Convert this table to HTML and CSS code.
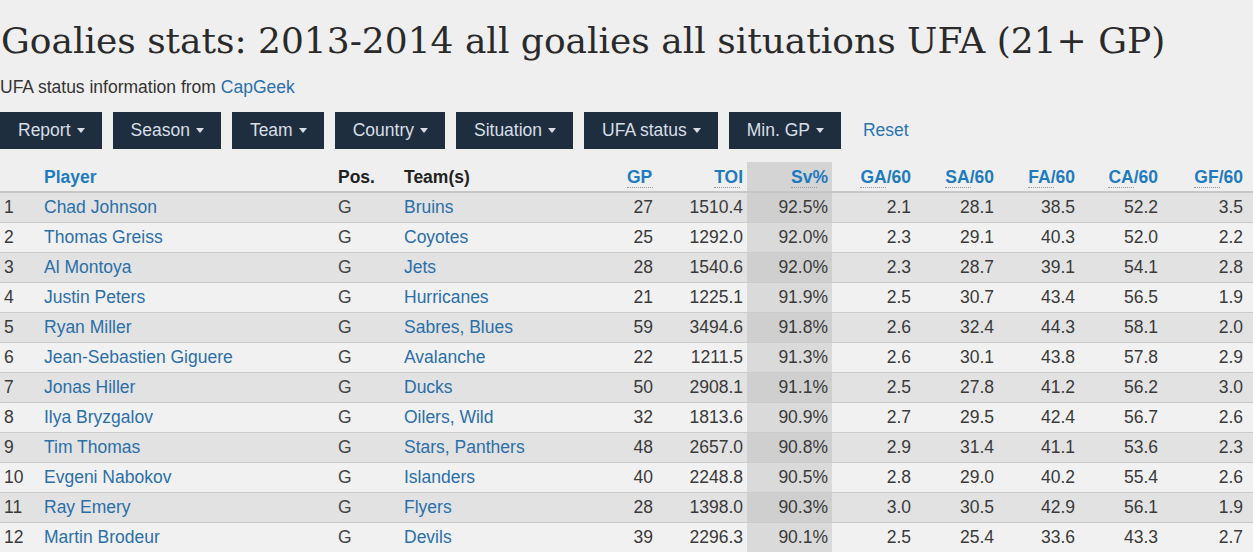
FILE: index.html
```html
<!DOCTYPE html>
<html lang="en">
<head>
<meta charset="utf-8">
<title>Goalies stats</title>
<link rel="stylesheet" href="styles.css">
</head>
<body>
<div class="page">
  <h1 class="title">Goalies stats: 2013-2014 all goalies all situations UFA (21+ GP)</h1>
  <p class="subtitle">UFA status information from <a class="link" href="#">CapGeek</a></p>
  <div class="toolbar">
    <span class="btn">Report<span class="caret"></span></span>
    <span class="btn">Season<span class="caret"></span></span>
    <span class="btn">Team<span class="caret"></span></span>
    <span class="btn">Country<span class="caret"></span></span>
    <span class="btn">Situation<span class="caret"></span></span>
    <span class="btn">UFA status<span class="caret"></span></span>
    <span class="btn">Min. GP<span class="caret"></span></span>
    <a class="reset" href="#">Reset</a>
  </div>
  <table class="stats">
    <colgroup>
      <col class="c-rank"><col class="c-player"><col class="c-pos"><col class="c-team">
      <col class="c-gp"><col class="c-toi"><col class="c-sv"><col class="c-ga">
      <col class="c-sa"><col class="c-fa"><col class="c-ca"><col class="c-gf">
    </colgroup>
    <thead>
      <tr>
        <th class="rank"></th>
        <th class="left sort">Player</th>
        <th class="left">Pos.</th>
        <th class="left">Team(s)</th>
        <th class="num sort"><span class="abbr">GP</span></th>
        <th class="num sort"><span class="abbr">TOI</span></th>
        <th class="num sort sv"><span class="abbr">Sv%</span></th>
        <th class="num sort"><span class="abbr">GA/60</span></th>
        <th class="num sort"><span class="abbr">SA/60</span></th>
        <th class="num sort"><span class="abbr">FA/60</span></th>
        <th class="num sort"><span class="abbr">CA/60</span></th>
        <th class="num sort last"><span class="abbr">GF/60</span></th>
      </tr>
    </thead>
    <tbody>
      <tr><td class="rank">1</td><td class="left"><a class="link" href="#">Chad Johnson</a></td><td class="left pos">G</td><td class="left"><a class="link" href="#">Bruins</a></td><td class="num">27</td><td class="num">1510.4</td><td class="num sv">92.5%</td><td class="num">2.1</td><td class="num">28.1</td><td class="num">38.5</td><td class="num">52.2</td><td class="num last">3.5</td></tr>
      <tr><td class="rank">2</td><td class="left"><a class="link" href="#">Thomas Greiss</a></td><td class="left pos">G</td><td class="left"><a class="link" href="#">Coyotes</a></td><td class="num">25</td><td class="num">1292.0</td><td class="num sv">92.0%</td><td class="num">2.3</td><td class="num">29.1</td><td class="num">40.3</td><td class="num">52.0</td><td class="num last">2.2</td></tr>
      <tr><td class="rank">3</td><td class="left"><a class="link" href="#">Al Montoya</a></td><td class="left pos">G</td><td class="left"><a class="link" href="#">Jets</a></td><td class="num">28</td><td class="num">1540.6</td><td class="num sv">92.0%</td><td class="num">2.3</td><td class="num">28.7</td><td class="num">39.1</td><td class="num">54.1</td><td class="num last">2.8</td></tr>
      <tr><td class="rank">4</td><td class="left"><a class="link" href="#">Justin Peters</a></td><td class="left pos">G</td><td class="left"><a class="link" href="#">Hurricanes</a></td><td class="num">21</td><td class="num">1225.1</td><td class="num sv">91.9%</td><td class="num">2.5</td><td class="num">30.7</td><td class="num">43.4</td><td class="num">56.5</td><td class="num last">1.9</td></tr>
      <tr><td class="rank">5</td><td class="left"><a class="link" href="#">Ryan Miller</a></td><td class="left pos">G</td><td class="left"><a class="link" href="#">Sabres</a><span class="link">, </span><a class="link" href="#">Blues</a></td><td class="num">59</td><td class="num">3494.6</td><td class="num sv">91.8%</td><td class="num">2.6</td><td class="num">32.4</td><td class="num">44.3</td><td class="num">58.1</td><td class="num last">2.0</td></tr>
      <tr><td class="rank">6</td><td class="left"><a class="link" href="#">Jean-Sebastien Giguere</a></td><td class="left pos">G</td><td class="left"><a class="link" href="#">Avalanche</a></td><td class="num">22</td><td class="num">1211.5</td><td class="num sv">91.3%</td><td class="num">2.6</td><td class="num">30.1</td><td class="num">43.8</td><td class="num">57.8</td><td class="num last">2.9</td></tr>
      <tr><td class="rank">7</td><td class="left"><a class="link" href="#">Jonas Hiller</a></td><td class="left pos">G</td><td class="left"><a class="link" href="#">Ducks</a></td><td class="num">50</td><td class="num">2908.1</td><td class="num sv">91.1%</td><td class="num">2.5</td><td class="num">27.8</td><td class="num">41.2</td><td class="num">56.2</td><td class="num last">3.0</td></tr>
      <tr><td class="rank">8</td><td class="left"><a class="link" href="#">Ilya Bryzgalov</a></td><td class="left pos">G</td><td class="left"><a class="link" href="#">Oilers</a><span class="link">, </span><a class="link" href="#">Wild</a></td><td class="num">32</td><td class="num">1813.6</td><td class="num sv">90.9%</td><td class="num">2.7</td><td class="num">29.5</td><td class="num">42.4</td><td class="num">56.7</td><td class="num last">2.6</td></tr>
      <tr><td class="rank">9</td><td class="left"><a class="link" href="#">Tim Thomas</a></td><td class="left pos">G</td><td class="left"><a class="link" href="#">Stars</a><span class="link">, </span><a class="link" href="#">Panthers</a></td><td class="num">48</td><td class="num">2657.0</td><td class="num sv">90.8%</td><td class="num">2.9</td><td class="num">31.4</td><td class="num">41.1</td><td class="num">53.6</td><td class="num last">2.3</td></tr>
      <tr><td class="rank">10</td><td class="left"><a class="link" href="#">Evgeni Nabokov</a></td><td class="left pos">G</td><td class="left"><a class="link" href="#">Islanders</a></td><td class="num">40</td><td class="num">2248.8</td><td class="num sv">90.5%</td><td class="num">2.8</td><td class="num">29.0</td><td class="num">40.2</td><td class="num">55.4</td><td class="num last">2.6</td></tr>
      <tr><td class="rank">11</td><td class="left"><a class="link" href="#">Ray Emery</a></td><td class="left pos">G</td><td class="left"><a class="link" href="#">Flyers</a></td><td class="num">28</td><td class="num">1398.0</td><td class="num sv">90.3%</td><td class="num">3.0</td><td class="num">30.5</td><td class="num">42.9</td><td class="num">56.1</td><td class="num last">1.9</td></tr>
      <tr><td class="rank">12</td><td class="left"><a class="link" href="#">Martin Brodeur</a></td><td class="left pos">G</td><td class="left"><a class="link" href="#">Devils</a></td><td class="num">39</td><td class="num">2296.3</td><td class="num sv">90.1%</td><td class="num">2.5</td><td class="num">25.4</td><td class="num">33.6</td><td class="num">43.3</td><td class="num last">2.7</td></tr>
    </tbody>
  </table>
</div>
</body>
</html>
```
FILE: styles.css
```css
html, body {
  margin: 0;
  padding: 0;
  background: #efefef;
}

body {
  font-family: "Liberation Sans", Arial, sans-serif;
  font-size: 17.5px;
  color: #333;
}

.page {
  width: 1253px;
  padding-top: 20px;
}

.title {
  margin: 0 0 0 1px;
  font-family: "DejaVu Serif", serif;
  font-weight: normal;
  font-size: 36px;
  line-height: 42px;
  color: #2a2a2a;
  white-space: nowrap;
}

.subtitle {
  margin: 15px 0 0 0;
  line-height: 20px;
  color: #333;
}

.link {
  color: #2b6fa8;
  text-decoration: none;
}

.toolbar {
  display: flex;
  align-items: center;
  gap: 11px;
  margin-top: 15px;
}

.btn {
  display: flex;
  align-items: center;
  height: 37px;
  padding: 0 17px 0 18px;
  background: #1f2e3f;
  color: #d8dee6;
  line-height: 21px;
}

.caret {
  display: inline-block;
  width: 0;
  height: 0;
  margin-left: 6px;
  border-left: 4.5px solid transparent;
  border-right: 4.5px solid transparent;
  border-top: 5px solid #d8dee6;
}

.reset {
  margin-left: 11px;
  color: #2b74b2;
  text-decoration: none;
}

.stats {
  margin-top: 13px;
  width: 1253px;
  table-layout: fixed;
  border-collapse: collapse;
}

.c-rank { width: 36px; }
.c-player { width: 294px; }
.c-pos { width: 66px; }
.c-team { width: 164px; }
.c-gp { width: 97px; }
.c-toi { width: 90px; }
.c-sv { width: 85px; }
.c-ga { width: 83px; }
.c-sa { width: 83px; }
.c-fa { width: 81px; }
.c-ca { width: 83px; }
.c-gf { width: 91px; }

.stats th,
.stats td {
  padding: 4px 4px 5px 8px;
  line-height: 20px;
  white-space: nowrap;
  overflow: hidden;
}

.stats th {
  height: 20px;
  padding-top: 5px;
  padding-bottom: 4px;
  font-weight: bold;
  color: #222;
  border-bottom: 2px solid #c6c6c6;
  vertical-align: top;
}

.stats th.sort {
  color: #1f7bbf;
}

.stats .rank {
  padding-left: 4px;
}

.stats .left {
  text-align: left;
}

.stats .num {
  text-align: right;
  padding-left: 4px;
  padding-right: 4px;
}

.stats .last {
  padding-right: 10px;
}

.abbr {
  display: inline-block;
  text-align: left;
  line-height: 20px;
  height: 20px;
}

.abbr::after {
  content: "";
  display: block;
  width: 26px;
  max-width: 100%;
  margin-top: 0;
  border-bottom: 1px dotted #8f9aa4;
}

.stats td {
  border-top: 1px solid #cbcbcb;
  color: #3a3a3a;
}

.stats td.pos {
  color: #444;
}

.stats tbody tr:nth-child(odd) td {
  background: #e2e2e2;
}

.stats tbody tr:nth-child(even) td {
  background: #f1f1f1;
}

.stats th.sv {
  background: #d4d4d4;
}

.stats tbody tr:nth-child(odd) td.sv {
  background: #cfcfcf;
}

.stats tbody tr:nth-child(even) td.sv {
  background: #dadada;
}
```
